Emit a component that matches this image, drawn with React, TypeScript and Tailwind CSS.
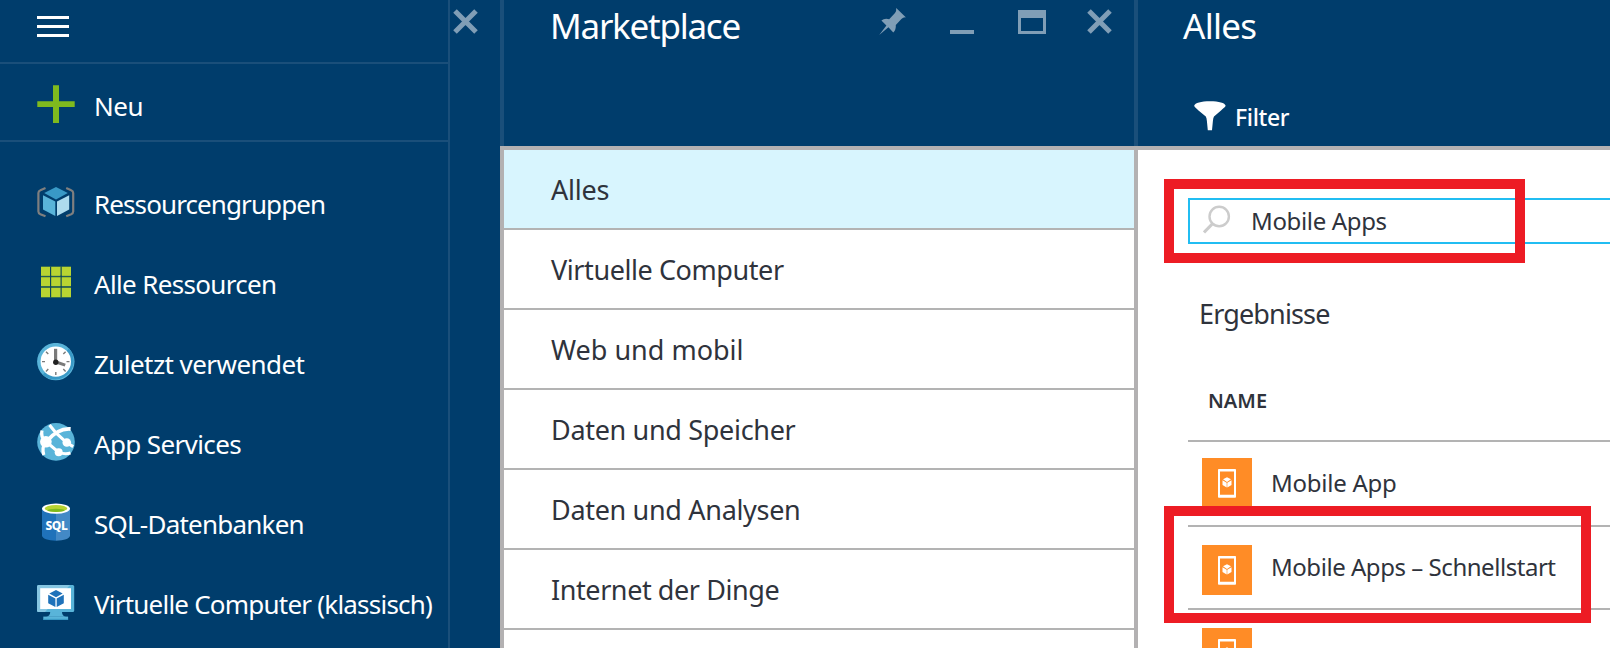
import React from "react";

type IconProps = { className?: string };

const CloseIcon = ({ className = "" }: IconProps) => (
  <svg className={`shrink-0 ${className}`} width="26" height="25" viewBox="0 0 26 25" fill="none">
    <path d="M2 2 L23 23 M23 2 L2 23" stroke="#809eb6" strokeWidth="5" />
  </svg>
);

const PlusIcon = () => (
  <svg className="shrink-0" width="38" height="38" viewBox="0 0 38 38">
    <path d="M16 0.3h6v16h15.7v5.8H22v16h-6v-16H.3v-5.8H16z" fill="#7fba1e" />
  </svg>
);

const GroupIcon = () => (
  <svg className="shrink-0" width="38" height="38" viewBox="0 0 38 38" fill="none">
    <path d="M8.5 5 L3.4 7.2 Q1.4 8 1.4 10 V28.5 Q1.4 30.3 3.4 31.2 L8.5 33.2 M29.2 5 L34.2 7.2 Q36.2 8 36.2 10 V28.5 Q36.2 30.3 34.2 31.2 L29.2 33.2" stroke="#7f7f7f" strokeWidth="2.2" />
    <path d="M19 4 L30.8 9.9 L19 16.6 L7.2 9.9 Z" fill="#3999c6" />
    <path d="M6 12.2 L18.3 18.6 V33 L6 26.4 Z" fill="#59b4d9" />
    <path d="M32.2 12.2 L20 18.6 V33 L32.2 26.4 Z" fill="#addbee" />
  </svg>
);

const GridIcon = () => (
  <svg className="shrink-0" width="38" height="38" viewBox="0 0 38 38">
    <rect x="4" y="3.5" width="30" height="31" fill="#6f9c35" />
    <path d="M4 13.2h30M4 23.8h30M13.6 3.5v31M24.2 3.5v31" stroke="#0a4560" strokeWidth="1.2" />
    <g fill="#b8d432">
      <rect x="4" y="4" width="9" height="8.8" />
      <rect x="14.3" y="4" width="9" height="8.8" />
      <rect x="24.8" y="4" width="9.2" height="8.8" />
      <rect x="4" y="14.5" width="9" height="8.6" />
      <rect x="14.3" y="14.5" width="9" height="8.6" />
      <rect x="24.8" y="14.5" width="9.2" height="8.6" />
      <rect x="4" y="25" width="9" height="9" />
      <rect x="14.3" y="25" width="9" height="9" />
      <rect x="24.8" y="25" width="9.2" height="9" />
    </g>
  </svg>
);

const ClockIcon = () => (
  <svg className="shrink-0" width="38" height="38" viewBox="0 0 38 38" fill="none">
    <circle cx="18.8" cy="18.6" r="18.7" fill="#59b4d9" />
    <path d="M32 5.4 A18.7 18.7 0 0 1 5.6 31.8 Z" fill="#3999c6" />
    <circle cx="18.8" cy="18.6" r="15.2" fill="#fff" />
    <path d="M18.8 29v3M5 18.6h3M29.5 18.6h3M9 8.8l2.3 2.3M28.6 8.8l-2.3 2.3M9 28.4l2.3-2.3M28.6 28.4l-2.3-2.3" stroke="#7a7a7a" strokeWidth="1.4" />
    <path d="M18.6 19V5.8" stroke="#7a7a7a" strokeWidth="3.2" />
    <path d="M19 19l9.2 3.2" stroke="#7a7a7a" strokeWidth="3" />
    <circle cx="18.8" cy="19.2" r="2.7" fill="#222" />
  </svg>
);

const AppServicesIcon = () => (
  <svg className="shrink-0" width="38" height="38" viewBox="0 0 38 38" fill="none">
    <circle cx="19" cy="18.9" r="18.8" fill="#59b4d9" />
    <g stroke="#fff">
      <path d="M12.5 2 L19 10 L29.8 19.8 L36.2 23.6" strokeWidth="3.1" />
      <path d="M33.6 6 Q21 5 9.5 18.5" strokeWidth="3.8" />
      <path d="M5 7.5 Q3.5 14 8.5 18.5 Q4.5 25 6.8 32" strokeWidth="3.2" />
      <path d="M9.5 19 L21.8 29.4 Q28 31.6 33.5 30" strokeWidth="3" />
    </g>
    <g fill="#fff">
      <circle cx="8.9" cy="18.8" r="5.8" />
      <circle cx="29.8" cy="19.5" r="4.3" />
      <circle cx="21.7" cy="29.2" r="4" />
    </g>
  </svg>
);

const SqlIcon = () => (
  <svg className="shrink-0" width="38" height="38" viewBox="0 0 38 38">
    <path d="M5 5.5 V32.6 C5 35.6 11 37.8 19 37.8 V5.5 Z" fill="#1f72ba" />
    <path d="M33 5.5 V32.6 C33 35.6 27 37.8 19 37.8 V5.5 Z" fill="#4389c6" />
    <ellipse cx="19" cy="5.6" rx="14" ry="5.2" fill="#fff" />
    <ellipse cx="19" cy="5.4" rx="11.3" ry="3.5" fill="#b8d432" />
    <ellipse cx="19" cy="7.4" rx="8.6" ry="1.6" fill="#7fba1e" />
    <text x="19.4" y="26.8" textAnchor="middle" fill="#fff" className="font-['Noto_Sans',sans-serif] text-[12px] font-extrabold tracking-[-0.4px]">SQL</text>
  </svg>
);

const VmIcon = () => (
  <svg className="shrink-0" width="38" height="38" viewBox="0 0 38 38">
    <rect x="0" y="2" width="37.2" height="27" rx="1.5" fill="#59b4d9" />
    <path d="M1.5 2 H33 L8 29 H1.5 Q0 29 0 27.5 V3.5 Q0 2 1.5 2Z" fill="#86c6e2" />
    <rect x="3.2" y="5.2" width="30.8" height="20.8" fill="#fff" />
    <path d="M13.2 29 H25 Q25 33 29 33.8 H9.2 Q13.2 33 13.2 29Z" fill="#59b4d9" />
    <rect x="6.3" y="33.6" width="24.8" height="3.2" fill="#59b4d9" />
    <rect x="6.3" y="35.8" width="24.8" height="1" fill="#3999c6" />
    <path d="M19 7 L25.7 10.4 L19 14.3 L12.3 10.4 Z M11.2 11.7 L18.4 15.5 V24 L11.2 20.2Z M26.8 11.7 L19.7 15.5 V24 L26.8 20.2Z" fill="#1f72ba" />
  </svg>
);

const MobileTile = () => (
  <svg className="block shrink-0" width="50" height="50" viewBox="0 0 50 50">
    <rect width="50" height="50" fill="#ff8c26" />
    <path fillRule="evenodd" d="M16.8 11h16.4q.8 0 .8.8v27q0 .9-.8.9H16.8q-.8 0-.8-.9v-27q0-.8.8-.8z M18 13.6v23.2h14V13.6z" fill="#fff" />
    <path d="M25 19.3 L29 21.3 L25 23.9 L21 21.3Z M20.5 22.2 L24.7 24.7 V29.4 L20.5 27Z M29.5 22.2 L25.3 24.7 V29.4 L29.5 27Z" fill="#fff" />
  </svg>
);

const navItems = [
  { label: "Ressourcengruppen", icon: <GroupIcon />, track: "tracking-[-0.9px]" },
  { label: "Alle Ressourcen", icon: <GridIcon />, track: "tracking-[-0.66px]" },
  { label: "Zuletzt verwendet", icon: <ClockIcon />, track: "tracking-[-0.56px]" },
  { label: "App Services", icon: <AppServicesIcon />, track: "tracking-[-0.63px]" },
  { label: "SQL-Datenbanken", icon: <SqlIcon />, track: "tracking-[-0.78px]" },
  { label: "Virtuelle Computer (klassisch)", icon: <VmIcon />, track: "tracking-[-0.78px]" },
];

const categories = [
  { label: "Alles", track: "tracking-[-0.2px]" },
  { label: "Virtuelle Computer", track: "tracking-[-0.42px]" },
  { label: "Web und mobil", track: "tracking-[0px]" },
  { label: "Daten und Speicher", track: "tracking-[-0.32px]" },
  { label: "Daten und Analysen", track: "tracking-[-0.32px]" },
  { label: "Internet der Dinge", track: "tracking-[-0.42px]" },
];

function Sidebar() {
  return (
    <nav className="flex w-[450px] shrink-0 flex-col border-r-2 border-[#1a4f7a] text-[26px] text-white">
      <div className="flex h-16 shrink-0 flex-col gap-[6px] border-b-2 border-[#1a4f7a] pt-4 pl-[37px]">
        <div className="h-[3px] w-8 bg-white" />
        <div className="h-[3px] w-8 bg-white" />
        <div className="h-[3px] w-8 bg-white" />
      </div>
      <div className="flex h-[78px] shrink-0 items-center gap-[19px] border-b-2 border-[#1a4f7a] pt-1 pl-[37px]">
        <PlusIcon />
        <span className="pt-1 leading-8 tracking-[-0.5px]">Neu</span>
      </div>
      <div className="pt-5">
        {navItems.map((n) => (
          <div key={n.label} className="flex h-20 items-center gap-[19px] pl-[37px]">
            {n.icon}
            <span className={`pt-1 leading-8 whitespace-nowrap ${n.track}`}>{n.label}</span>
          </div>
        ))}
      </div>
    </nav>
  );
}

function MarketplaceBlade() {
  return (
    <section className="flex w-[634px] shrink-0 flex-col">
      <header className="flex h-[146px] shrink-0 items-start border-l-4 border-[#1a4f7a]">
        <h1 className="w-[375px] pt-[1px] pl-[46px] text-[35px] leading-[49px] font-normal tracking-[-1.25px] text-white">Marketplace</h1>
        <svg className="mt-2 shrink-0" width="27" height="27" viewBox="0 0 27 27">
          <path d="M17.2 0 L27 9.4 Q24.5 8.9 22.4 10.9 L16.8 16.9 Q17.2 21.5 14.3 24.4 L9.4 19.2 L0.2 27 L7.4 17.4 L2.4 12.4 Q5.5 10 10.2 11.2 L16 5 Q17.6 3 17.2 0Z" fill="#809eb6" />
        </svg>
        <div className="mt-[30px] ml-11 h-1 w-6 bg-[#809eb6]" />
        <div className="mt-[10px] ml-11 h-6 w-7 border-x-[3px] border-t-8 border-b-[3px] border-[#809eb6]" />
        <CloseIcon className="mt-[9px] ml-[41px]" />
      </header>
      <ul className="flex-1 border-t-4 border-l-4 border-[#b3b1b2] bg-white text-[27px] text-[#2f333c]">
        {categories.map((c, i) => (
          <li key={c.label} className={`flex h-20 items-center border-b-2 border-[#b3b3b3] pt-[2px] pl-[47px] ${i === 0 ? "bg-[#d8f5fe]" : "bg-white"}`}>
            <span className={c.track}>{c.label}</span>
          </li>
        ))}
      </ul>
    </section>
  );
}

function ResultsBlade() {
  return (
    <section className="flex min-w-0 flex-1 flex-col">
      <header className="h-[146px] shrink-0 border-l-4 border-[#1a4f7a] text-white">
        <h1 className="pt-[1px] pl-[45px] text-[35px] leading-[49px] font-normal tracking-[-0.7px]">Alles</h1>
        <div className="flex items-center gap-[9px] pt-[50px] pl-[56px]">
          <svg className="shrink-0" width="32" height="30" viewBox="0 0 32 30">
            <path d="M0.2 4.5 C1 2 7 .2 16 .2 S31 2 31.6 4.5 C31.6 6 29 7.6 27 9.4 L20 15.6 Q19.2 17 18.9 20 L18 29.2 H13.8 L12.9 20 Q12.6 17 11.8 15.6 L4.5 9.4 C2.5 7.6 .2 6 .2 4.5Z" fill="#fff" />
          </svg>
          <span className="pt-[3px] text-[23px] leading-7 font-medium tracking-[-0.35px]">Filter</span>
        </div>
      </header>
      <div className="flex flex-1 flex-col border-t-4 border-l-4 border-[#b3b1b2] bg-white pl-[50px] text-[#2f333c]">
        <div className="relative mt-12 h-[46px] shrink-0">
          <div className="flex h-full items-center border-y-2 border-l-2 border-[#21bdf2] pl-[13px]">
            <svg className="mb-[2px] shrink-0" width="28" height="30" viewBox="0 0 28 30" fill="none" stroke="#ccc">
              <circle cx="16.2" cy="11.5" r="9.7" strokeWidth="2.4" />
              <path d="M9.6 18.6 L1 27.4" strokeWidth="3" />
            </svg>
            <span className="ml-5 text-[24px] leading-8 tracking-[-0.35px]">Mobile Apps</span>
          </div>
          <div className="absolute -top-[19px] -left-6 h-[84px] w-[361px] border-[10px] border-[#ed1c24]" />
        </div>
        <h2 className="mt-[50px] pl-[11px] text-[27px] leading-10 tracking-[-0.85px]">Ergebnisse</h2>
        <div className="mt-[50px] h-[58px] shrink-0 border-b-2 border-[#b3b3b3] pt-[2px] pl-5 text-[20px] leading-[29px] font-semibold">NAME</div>
        <div className="flex h-[85px] shrink-0 items-start gap-[19px] border-b-2 border-[#b3b3b3] pt-4 pl-[14px]">
          <MobileTile />
          <span className="text-[24px] leading-[49px] tracking-[-0.25px]">Mobile App</span>
        </div>
        <div className="relative flex h-[83px] shrink-0 items-start gap-[19px] border-b-2 border-[#b3b3b3] pt-[18px] pl-[14px]">
          <MobileTile />
          <span className="text-[24px] leading-[44px] tracking-[-0.46px]">Mobile Apps – Schnellstart</span>
          <div className="absolute -top-[21px] -left-6 h-[117px] w-[427px] border-[10px] border-[#ed1c24]" />
        </div>
        <div className="flex shrink-0 items-start pt-[18px] pl-[14px]">
          <MobileTile />
        </div>
      </div>
    </section>
  );
}

export default function App() {
  return (
    <div className="flex h-[648px] w-[1610px] overflow-hidden bg-[#003d6c] font-['Noto_Sans','Open_Sans',sans-serif]">
      <Sidebar />
      <div className="w-[50px] shrink-0 pt-[9px] pl-[3px]">
        <CloseIcon />
      </div>
      <MarketplaceBlade />
      <ResultsBlade />
    </div>
  );
}
